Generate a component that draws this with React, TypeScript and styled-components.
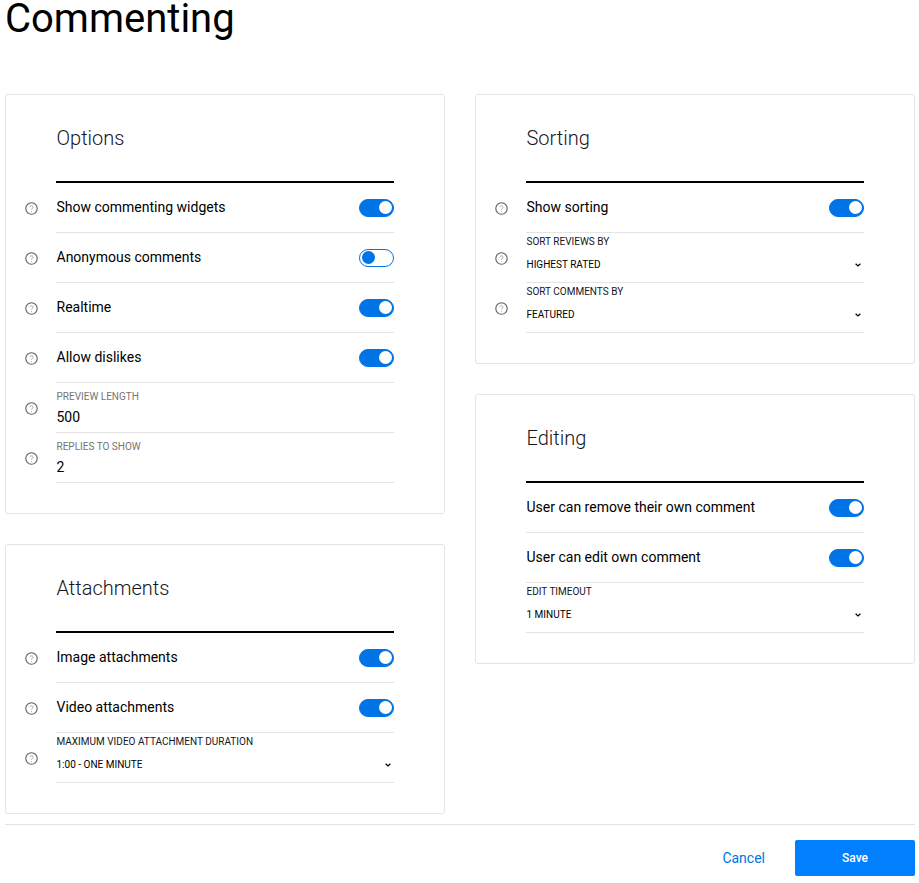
import styled, { createGlobalStyle } from 'styled-components'

const GlobalStyle = createGlobalStyle`
  html, body {
    margin: 0;
    padding: 0;
    background: #fff;
    font-family: Roboto, "Liberation Sans", sans-serif;
    color: #000;
  }
`

const Page = styled.div`
  width: 910px;
  padding-left: 5px;
`

const PageTitle = styled.h1`
  margin: 0;
  height: 94px;
  font-size: 40px;
  font-weight: 400;
  line-height: 38px;
`

const Columns = styled.div`
  display: grid;
  grid-template-columns: 440px 440px;
  column-gap: 30px;
  align-items: start;
`

const Column = styled.div`
  display: flex;
  flex-direction: column;
  gap: 30px;
`

const Card = styled.section`
  box-sizing: border-box;
  border: 1px solid #e4e4e4;
  border-radius: 3px;
  padding-bottom: 30px;
`

const CardHeader = styled.div`
  box-sizing: border-box;
  height: 88px;
  margin: 0 50px;
  padding: 29px 0 0 0.5px;
  border-bottom: 2px solid #000;
  font-size: 20px;
  font-weight: 300;
  line-height: 28px;
  color: #16161d;
`

const Row = styled.div`
  display: flex;
  height: 50px;
  padding-right: 50px;
`

const HelpSlot = styled.div`
  flex: 0 0 50px;
  display: flex;
  align-items: center;
  padding-left: 19px;
  box-sizing: border-box;
`

const RowBody = styled.div`
  flex: 1;
  min-width: 0;
  box-sizing: border-box;
  border-bottom: 1px solid #e4e4e4;
`

const ToggleBody = styled(RowBody)`
  display: flex;
  align-items: center;
  justify-content: space-between;
`

const RowLabel = styled.span`
  padding-left: 0.5px;
  font-size: 14px;
  line-height: 20px;
  margin-top: -2px;
`

const Track = styled.span<{ $on: boolean }>`
  box-sizing: border-box;
  width: 35px;
  height: 18px;
  border-radius: 9px;
  border: 1px solid #0073e6;
  background: ${(p) => (p.$on ? '#0073e6' : '#fff')};
  display: flex;
  align-items: center;
  justify-content: ${(p) => (p.$on ? 'flex-end' : 'flex-start')};
  padding: 0 1.5px;
`

const Thumb = styled.span<{ $on: boolean }>`
  width: 13px;
  height: 13px;
  border-radius: 50%;
  background: ${(p) => (p.$on ? '#fff' : '#0073e6')};
`

const FieldLabel = styled.div<{ $muted?: boolean }>`
  margin-top: 8px;
  padding-left: 0.5px;
  font-size: 10px;
  line-height: 12px;
  text-transform: uppercase;
  color: ${(p) => (p.$muted ? '#757575' : '#16161d')};
`

const InputValue = styled.div`
  margin-top: 5px;
  padding-left: 0.5px;
  font-size: 14px;
  line-height: 18px;
`

const SelectLabel = styled(FieldLabel)`
  margin-top: 3px;
`

const SelectValue = styled.div`
  display: flex;
  align-items: center;
  justify-content: space-between;
  margin-top: 11px;
  padding: 0 3px 0 0.5px;
  font-size: 10px;
  line-height: 12px;
  text-transform: uppercase;
`

const Footer = styled.footer`
  display: flex;
  justify-content: flex-end;
  align-items: center;
  gap: 30px;
  margin-top: 10px;
  padding-top: 15px;
  border-top: 1px solid #e4e4e4;
`

const CancelLink = styled.a`
  font-size: 14px;
  color: #0073e6;
  cursor: pointer;
`

const SaveButton = styled.button`
  width: 120px;
  height: 36px;
  border: 0;
  border-radius: 2px;
  background: #0080ff;
  color: #fff;
  font-family: inherit;
  font-size: 12px;
  font-weight: 500;
`

function HelpIcon() {
  return (
    <svg width="13" height="13" viewBox="0 0 13 13" fill="none">
      <circle cx="6.5" cy="6.5" r="5.7" stroke="#5f5f5f" strokeWidth="1.1" />
      <path d="M5 5.2a1.5 1.5 0 1 1 2.3 1.3c-.5.3-.8.6-.8 1.2" stroke="#a0a0a0" strokeWidth="0.9" />
      <circle cx="6.5" cy="9.4" r="0.5" fill="#a0a0a0" />
    </svg>
  )
}

function Chevron() {
  return (
    <svg width="6" height="4" viewBox="0 0 6 4" fill="none">
      <path d="M.6.7 3 3 5.4.7" stroke="#000" strokeWidth="1.2" />
    </svg>
  )
}

function ToggleRow({ label, on = true, help = true }: { label: string; on?: boolean; help?: boolean }) {
  return (
    <Row>
      <HelpSlot>{help && <HelpIcon />}</HelpSlot>
      <ToggleBody>
        <RowLabel>{label}</RowLabel>
        <Track $on={on}>
          <Thumb $on={on} />
        </Track>
      </ToggleBody>
    </Row>
  )
}

function InputRow({ label, value }: { label: string; value: string }) {
  return (
    <Row>
      <HelpSlot>
        <HelpIcon />
      </HelpSlot>
      <RowBody>
        <FieldLabel $muted>{label}</FieldLabel>
        <InputValue>{value}</InputValue>
      </RowBody>
    </Row>
  )
}

function SelectRow({ label, value, help = true }: { label: string; value: string; help?: boolean }) {
  return (
    <Row>
      <HelpSlot>{help && <HelpIcon />}</HelpSlot>
      <RowBody>
        <SelectLabel>{label}</SelectLabel>
        <SelectValue>
          {value}
          <Chevron />
        </SelectValue>
      </RowBody>
    </Row>
  )
}

export default function App() {
  return (
    <Page>
      <GlobalStyle />
      <PageTitle>Commenting</PageTitle>
      <Columns>
        <Column>
          <Card>
            <CardHeader>Options</CardHeader>
            <ToggleRow label="Show commenting widgets" />
            <ToggleRow label="Anonymous comments" on={false} />
            <ToggleRow label="Realtime" />
            <ToggleRow label="Allow dislikes" />
            <InputRow label="Preview length" value="500" />
            <InputRow label="Replies to show" value="2" />
          </Card>
          <Card>
            <CardHeader>Attachments</CardHeader>
            <ToggleRow label="Image attachments" />
            <ToggleRow label="Video attachments" />
            <SelectRow label="Maximum video attachment duration" value="1:00 - One minute" />
          </Card>
        </Column>
        <Column>
          <Card>
            <CardHeader>Sorting</CardHeader>
            <ToggleRow label="Show sorting" />
            <SelectRow label="Sort reviews by" value="Highest rated" />
            <SelectRow label="Sort comments by" value="Featured" />
          </Card>
          <Card>
            <CardHeader>Editing</CardHeader>
            <ToggleRow label="User can remove their own comment" help={false} />
            <ToggleRow label="User can edit own comment" help={false} />
            <SelectRow label="Edit timeout" value="1 minute" help={false} />
          </Card>
        </Column>
      </Columns>
      <Footer>
        <CancelLink>Cancel</CancelLink>
        <SaveButton>Save</SaveButton>
      </Footer>
    </Page>
  )
}
